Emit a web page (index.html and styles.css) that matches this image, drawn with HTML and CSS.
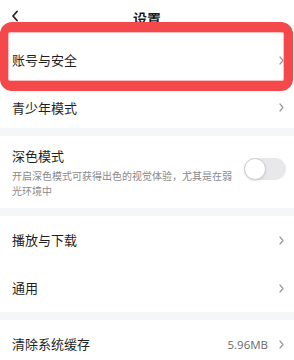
FILE: index.html
```html
<!DOCTYPE html>
<html lang="zh-CN">
<head>
<meta charset="utf-8">
<link rel="stylesheet" href="styles.css">
</head>
<body>
<div class="page">
  <header class="topbar">
    <svg class="back" width="8" height="12" viewBox="0 0 8 12"><path d="M6 1.5 L2 6 L6 10.5" fill="none" stroke="#222" stroke-width="1.8" stroke-linecap="round" stroke-linejoin="round"/></svg>
    <div class="title">设置</div>
  </header>

  <div class="row r1"><span class="label">账号与安全</span><svg class="chev" width="5" height="9" viewBox="0 0 5 9"><path d="M1 1 L4 4.5 L1 8" fill="none" stroke="#9a9a9a" stroke-width="1.2" stroke-linecap="round" stroke-linejoin="round"/></svg></div>
  <div class="row r2"><span class="label">青少年模式</span><svg class="chev" width="5" height="9" viewBox="0 0 5 9"><path d="M1 1 L4 4.5 L1 8" fill="none" stroke="#9a9a9a" stroke-width="1.2" stroke-linecap="round" stroke-linejoin="round"/></svg></div>

  <div class="band"></div>

  <div class="row dark">
    <div class="texts">
      <div class="label">深色模式</div>
      <div class="sub">开启深色模式可获得出色的视觉体验，尤其是在弱光环境中</div>
    </div>
    <div class="toggle"><div class="knob"></div></div>
  </div>

  <div class="band"></div>

  <div class="row"><span class="label">播放与下载</span><svg class="chev" width="5" height="9" viewBox="0 0 5 9"><path d="M1 1 L4 4.5 L1 8" fill="none" stroke="#9a9a9a" stroke-width="1.2" stroke-linecap="round" stroke-linejoin="round"/></svg></div>
  <div class="row"><span class="label">通用</span><svg class="chev" width="5" height="9" viewBox="0 0 5 9"><path d="M1 1 L4 4.5 L1 8" fill="none" stroke="#9a9a9a" stroke-width="1.2" stroke-linecap="round" stroke-linejoin="round"/></svg></div>

  <div class="band"></div>

  <div class="row"><span class="label">清除系统缓存</span><span class="value">5.96MB</span><svg class="chev" width="5" height="9" viewBox="0 0 5 9"><path d="M1 1 L4 4.5 L1 8" fill="none" stroke="#9a9a9a" stroke-width="1.2" stroke-linecap="round" stroke-linejoin="round"/></svg></div>

  <div class="highlight"></div>
</div>
</body>
</html>
```

FILE: styles.css
```css
html, body {
  margin: 0;
  padding: 0;
  background: #ffffff;
}
body {
  font-family: "Noto Sans CJK SC", "Noto Sans", sans-serif;
  color: #1f1f1f;
  width: 294px;
  height: 360px;
  overflow: hidden;
}
.page {
  position: relative;
  width: 294px;
}
.topbar {
  height: 36px;
  display: flex;
  align-items: center;
  justify-content: center;
  position: relative;
}
.back {
  position: absolute;
  left: 11px;
  top: 10px;
}
.title {
  font-size: 14px;
  font-weight: 700;
  color: #1a1a1a;
  line-height: 18px;
  margin-top: 0;
}
.row {
  display: flex;
  align-items: center;
  height: 48px;
  padding: 0 10px 0 12px;
  box-sizing: border-box;
}
.row.r2 {
  height: 44px;
  padding-top: 3px;
}
.label {
  font-size: 13px;
  line-height: 18px;
  color: #1f1f1f;
  flex: 1;
}
.chev {
  flex: none;
  display: block;
}
.value {
  font-family: "Open Sans", "Noto Sans", sans-serif;
  font-size: 11.5px;
  color: #6a6a6a;
  margin-right: 11px;
}
.band {
  height: 8px;
  background: #f5f6f8;
}
.row.dark {
  height: 72px;
  align-items: flex-start;
  padding: 11px 8px 10px 12px;
}
.texts {
  flex: 1;
  display: flex;
  flex-direction: column;
}
.sub {
  font-size: 10px;
  line-height: 15px;
  color: #8a8a8a;
  margin-top: 3px;
  width: 224px;
}
.toggle {
  width: 42px;
  height: 22px;
  border-radius: 11px;
  background: #e8e8ea;
  margin-top: 11px;
  position: relative;
  flex: none;
}
.knob {
  width: 20px;
  height: 20px;
  border-radius: 50%;
  background: #ffffff;
  border: 1px solid #cfcfcf;
  box-shadow: 0 1px 2px rgba(0,0,0,0.12);
  position: absolute;
  left: 0;
  top: 0;
}
.highlight {
  position: absolute;
  left: 0;
  top: 22px;
  width: 293px;
  height: 69px;
  box-sizing: border-box;
  border: 9px solid #f5484b;
  border-top-width: 10px;
  border-left-width: 8px;
  border-bottom-width: 10px;
  border-radius: 12px;
  box-shadow: inset 0 0 0 1px rgba(245,72,75,0.35);
}
```
